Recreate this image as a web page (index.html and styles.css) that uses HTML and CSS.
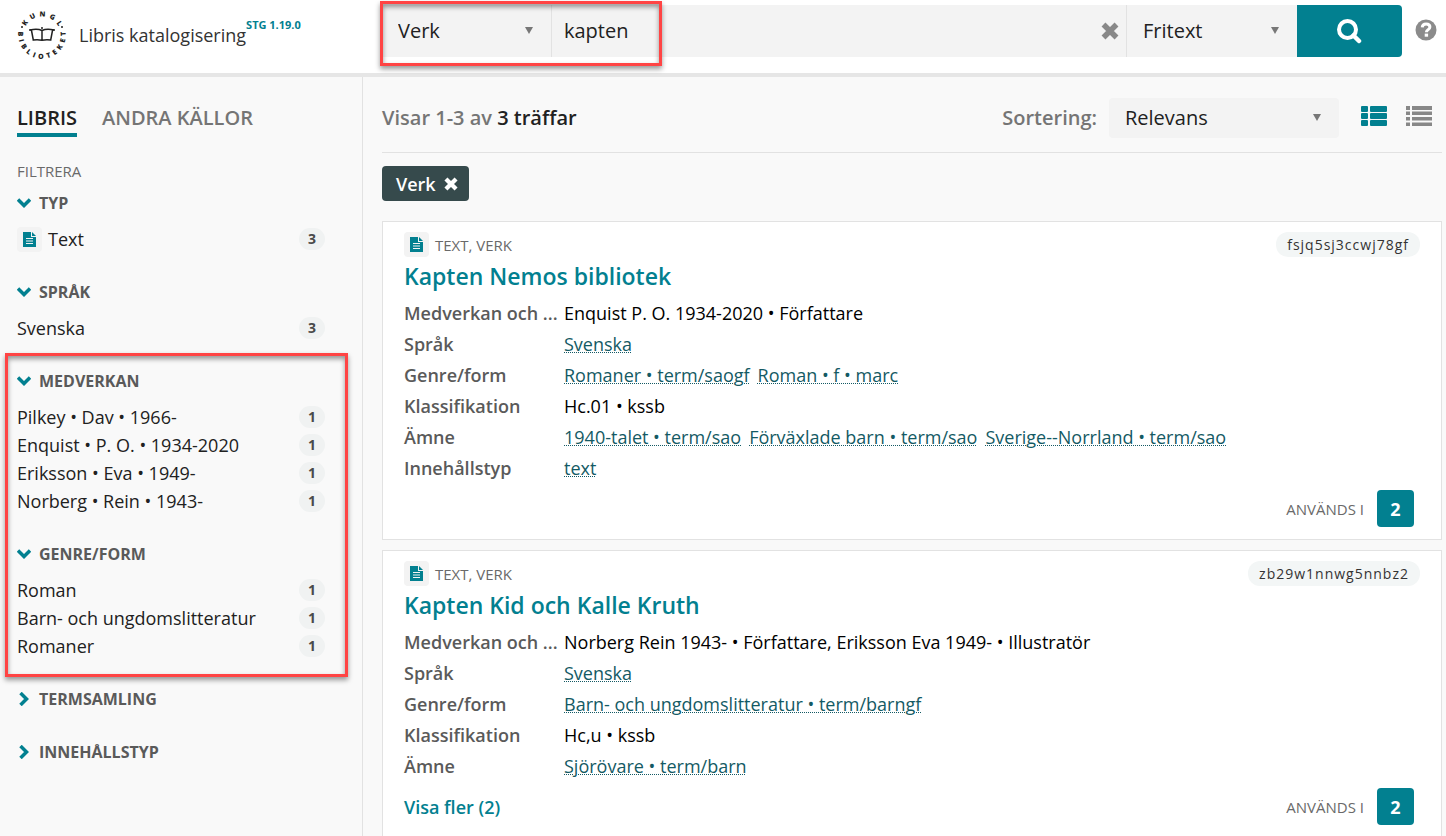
FILE: index.html
```html
<!DOCTYPE html>
<html lang="sv">
<head>
    <meta charset="UTF-8">
    <meta name="viewport" content="width=device-width, initial-scale=1.0">
    <title>Libris katalogisering</title>
    <link rel="stylesheet" href="styles.css">
</head>
<body>
    <!-- Ikoner -->
    <svg class="sprite" aria-hidden="true">
        <symbol id="icon-down" viewBox="0 0 14 10">
            <path d="M1 1.5 7 7.5 13 1.5" fill="none" stroke="currentColor" stroke-width="3.500"/>
        </symbol>
        <symbol id="icon-right" viewBox="0 0 10 14">
            <path d="M1.5 1 7.5 7 1.5 13" fill="none" stroke="currentColor" stroke-width="3.500"/>
        </symbol>
        <symbol id="icon-text" viewBox="0 0 13 15">
            <path fill="currentColor" fill-rule="evenodd" d="M0 0h8v5h5v10H0zM3 6v1h7V6zM3 8.500v1h7v-1zM3 11v1h7v-1z"/>
            <path fill="currentColor" d="M9 0l4 4H9z"/>
        </symbol>
        <symbol id="icon-cross" viewBox="0 0 18 18">
            <path d="M2.500 2.500l13 13M15.500 2.500l-13 13" fill="none" stroke="currentColor" stroke-width="5.500"/>
        </symbol>
    </svg>

    <header class="header">
        <a class="brand" href="#">
            <svg class="logo" viewBox="0 0 50 50" role="img" aria-label="Kungl. Biblioteket">
                <path id="arc-top" fill="none" d="M6.500 25a18.500 18.500 0 0 1 37 0"/>
                <path id="arc-bottom" fill="none" d="M4.400 13.100a23.800 23.800 0 1 0 41.200 0"/>
                <text class="logo-text"><textPath href="#arc-top" startOffset="50%" text-anchor="middle">K  U  N  G  L</textPath></text>
                <text class="logo-text"><textPath href="#arc-bottom" startOffset="50%" text-anchor="middle">B  I  B  L  I  O  T  E  K  E  T</textPath></text>
                <g fill="none" stroke="#222" stroke-width="1.500">
                    <path d="M13 20c4-1 9-1 12 .5 3-1.500 8-1.500 12-.5M14.500 20.500l1.800 9.500c3-.6 6-.4 8.700.2 2.700-.6 5.700-.8 8.700-.2l1.800-9.500M25 20.500v10"/>
                </g>
                <g fill="#222">
                    <circle cx="25" cy="18" r="1"/>
                    <circle cx="13" cy="20" r="1"/>
                    <circle cx="37" cy="20" r="1"/>
                    <circle cx="5" cy="17" r="1"/>
                    <circle cx="45" cy="17" r="1"/>
                </g>
            </svg>
            <span class="brand-name">Libris katalogisering</span>
            <span class="brand-version">STG 1.19.0</span>
        </a>

        <form class="search">
            <div class="select search-type">
                <select aria-label="Typ av resurs"><option>Verk</option></select>
            </div>
            <input class="search-input" type="text" value="kapten" aria-label="Sök">
            <button class="clear-button" type="button" aria-label="Rensa">
                <svg width="18" height="18"><use href="#icon-cross"/></svg>
            </button>
            <div class="select search-field">
                <select aria-label="Sökfält"><option>Fritext</option></select>
            </div>
            <button class="search-button" type="submit" aria-label="Sök">
                <svg width="26" height="26" viewBox="0 0 26 26" fill="none" stroke="#fff">
                    <circle cx="10.500" cy="11.500" r="8.500" stroke-width="4"/>
                    <path d="M16.500 17.500l5.500 5.500" stroke-width="4.500" stroke-linecap="round"/>
                </svg>
            </button>
            <div class="marker marker-search"></div>
        </form>
        <a class="help" href="#" aria-label="Hjälp">
            <svg width="22" height="22" viewBox="0 0 22 22">
                <circle cx="11" cy="11" r="10.500" fill="#8b8b8b"/>
                <path d="M7.200 8.400C7.400 6 9 4.900 11.100 4.900c2.200 0 3.800 1.200 3.800 3.100 0 2.700-3.500 2.500-3.500 5.300" fill="none" stroke="#fff" stroke-width="3"/>
                <path d="M9.700 14.600h3.400v3.100H9.700z" fill="#fff"/>
            </svg>
        </a>
    </header>

    <div class="page">
        <aside class="sidebar">
            <nav class="tabs">
                <a class="tab active" href="#">LIBRIS</a>
                <a class="tab" href="#">ANDRA KÄLLOR</a>
            </nav>

            <div class="filter-title">FILTRERA</div>

            <section class="facet">
                <button class="facet-toggle" type="button"><svg width="16" height="10"><use href="#icon-down"/></svg>TYP</button>
                <ul class="facet-list">
                    <li><a href="#"><span class="type-icon"><svg width="13" height="15"><use href="#icon-text"/></svg></span>Text</a><span class="count">3</span></li>
                </ul>
            </section>

            <section class="facet">
                <button class="facet-toggle" type="button"><svg width="16" height="10"><use href="#icon-down"/></svg>SPRÅK</button>
                <ul class="facet-list">
                    <li><a href="#">Svenska</a><span class="count">3</span></li>
                </ul>
            </section>

            <div class="facet-group">
                <section class="facet">
                    <button class="facet-toggle" type="button"><svg width="16" height="10"><use href="#icon-down"/></svg>MEDVERKAN</button>
                    <ul class="facet-list">
                        <li><a href="#">Pilkey • Dav • 1966-</a><span class="count">1</span></li>
                        <li><a href="#">Enquist • P. O. • 1934-2020</a><span class="count">1</span></li>
                        <li><a href="#">Eriksson • Eva • 1949-</a><span class="count">1</span></li>
                        <li><a href="#">Norberg • Rein • 1943-</a><span class="count">1</span></li>
                    </ul>
                </section>

                <section class="facet">
                    <button class="facet-toggle" type="button"><svg width="16" height="10"><use href="#icon-down"/></svg>GENRE/FORM</button>
                    <ul class="facet-list">
                        <li><a href="#">Roman</a><span class="count">1</span></li>
                        <li><a href="#">Barn- och ungdomslitteratur</a><span class="count">1</span></li>
                        <li><a href="#">Romaner</a><span class="count">1</span></li>
                    </ul>
                </section>
                <div class="marker marker-facets"></div>
            </div>

            <section class="facet">
                <button class="facet-toggle" type="button"><svg width="12" height="14"><use href="#icon-right"/></svg>TERMSAMLING</button>
            </section>

            <section class="facet">
                <button class="facet-toggle" type="button"><svg width="12" height="14"><use href="#icon-right"/></svg>INNEHÅLLSTYP</button>
            </section>
        </aside>

        <main class="results">
            <div class="results-bar">
                <div class="hits">Visar 1-3 av <strong>3 träffar</strong></div>
                <div class="sorting">
                    <label for="sort">Sortering:</label>
                    <div class="select sort-select">
                        <select id="sort"><option>Relevans</option></select>
                    </div>
                    <button class="view-button active" type="button" aria-label="Detaljerad vy">
                        <svg width="26" height="20" viewBox="0 0 26 20" fill="currentColor">
                            <rect width="7" height="6" rx="1"/><rect x="9" width="17" height="6" rx="1"/>
                            <rect y="7" width="7" height="6" rx="1"/><rect x="9" y="7" width="17" height="6" rx="1"/>
                            <rect y="14" width="7" height="6" rx="1"/><rect x="9" y="14" width="17" height="6" rx="1"/>
                        </svg>
                    </button>
                    <button class="view-button" type="button" aria-label="Kompakt vy">
                        <svg width="26" height="20" viewBox="0 0 26 20" fill="currentColor">
                            <path d="M0 0h4v4H0zM6 0h20v4H6zM0 5.500h4v3.500H0zM6 5.500h20v3.500H6zM0 11h4v3.500H0zM6 11h20v3.500H6zM0 16.500h4v3.500H0zM6 16.500h20v3.500H6z"/>
                        </svg>
                    </button>
                </div>
            </div>

            <div class="chips">
                <button class="chip" type="button">Verk<svg width="14" height="14"><use href="#icon-cross"/></svg></button>
            </div>

            <article class="card">
                <div class="card-top">
                    <span class="type-icon"><svg width="13" height="15"><use href="#icon-text"/></svg></span>
                    <span class="card-type">TEXT, VERK</span>
                    <span class="card-id">fsjq5sj3ccwj78gf</span>
                </div>
                <h2 class="card-title"><a href="#">Kapten Nemos bibliotek</a></h2>
                <dl class="details">
                    <dt>Medverkan och ...</dt><dd>Enquist P. O. 1934-2020 • Författare</dd>
                    <dt>Språk</dt><dd><a href="#">Svenska</a></dd>
                    <dt>Genre/form</dt><dd><a href="#">Romaner • term/saogf</a><a href="#">Roman • f • marc</a></dd>
                    <dt>Klassifikation</dt><dd>Hc.01 • kssb</dd>
                    <dt>Ämne</dt><dd><a href="#">1940-talet • term/sao</a><a href="#">Förväxlade barn • term/sao</a><a href="#">Sverige--Norrland • term/sao</a></dd>
                    <dt>Innehållstyp</dt><dd><a href="#">text</a></dd>
                </dl>
                <div class="card-bottom">
                    <span class="used-in">ANVÄNDS I</span>
                    <button class="used-count" type="button">2</button>
                </div>
            </article>

            <article class="card">
                <div class="card-top">
                    <span class="type-icon"><svg width="13" height="15"><use href="#icon-text"/></svg></span>
                    <span class="card-type">TEXT, VERK</span>
                    <span class="card-id">zb29w1nnwg5nnbz2</span>
                </div>
                <h2 class="card-title"><a href="#">Kapten Kid och Kalle Kruth</a></h2>
                <dl class="details">
                    <dt>Medverkan och ...</dt><dd>Norberg Rein 1943- • Författare, Eriksson Eva 1949- • Illustratör</dd>
                    <dt>Språk</dt><dd><a href="#">Svenska</a></dd>
                    <dt>Genre/form</dt><dd><a href="#">Barn- och ungdomslitteratur • term/barngf</a></dd>
                    <dt>Klassifikation</dt><dd>Hc,u • kssb</dd>
                    <dt>Ämne</dt><dd><a href="#">Sjörövare • term/barn</a></dd>
                </dl>
                <div class="card-bottom">
                    <a class="show-more" href="#">Visa fler (2)</a>
                    <span class="used-in">ANVÄNDS I</span>
                    <button class="used-count" type="button">2</button>
                </div>
            </article>
        </main>
    </div>
</body>
</html>
```
FILE: styles.css
```css
* {
    box-sizing: border-box;
}

body {
    font-family: "Open Sans", sans-serif;
    font-size: 18px;
    line-height: 28px;
    margin: 0;
    color: #212121;
    background-color: #f9f9f9;
    height: 100vh;
    overflow: hidden;
}

a {
    color: inherit;
    text-decoration: none;
}

button, input, select {
    font: inherit;
    color: inherit;
    border: none;
    border-radius: 0;
    background: none;
    margin: 0;
    padding: 0;
}

button {
    cursor: pointer;
}

svg {
    display: block;
    flex: none;
}

.sprite {
    position: absolute;
    width: 0;
    height: 0;
}

/* Sidhuvud */
.header {
    display: flex;
    align-items: flex-start;
    background-color: #fff;
    border-bottom: 4px solid #e6e6e6;
    padding: 5px 9px 13px 17px;
}

.brand {
    display: flex;
    align-items: center;
    flex: none;
    width: 365px;
    padding-top: 5px;
}

.logo {
    width: 50px;
    height: 50px;
    margin-right: 12px;
    overflow: visible;
}

.logo-text {
    font-size: 7px;
    font-weight: 800;
    fill: #222;
    white-space: pre;
}

.brand-name {
    color: #333;
}

.brand-version {
    align-self: flex-start;
    font-size: 11px;
    font-weight: 700;
    line-height: 30px;
    color: #028090;
}

.search {
    position: relative;
    display: flex;
    flex: 1;
    height: 52px;
}

.select {
    position: relative;
    background-color: #f3f3f3;
}

.select select {
    width: 100%;
    height: 100%;
    padding-left: 16px;
    appearance: none;
    outline: none;
}

.select::after {
    content: "";
    position: absolute;
    right: 18px;
    top: 50%;
    margin-top: -4px;
    border: 4px solid transparent;
    border-top: 7px solid #777;
    border-bottom: none;
    pointer-events: none;
}

.search .select {
    width: 170px;
    font-size: 20px;
    border-right: 1px solid #e2e2e2;
}

.search .search-field {
    width: 171px;
    border-left: 1px solid #e2e2e2;
    border-right: none;
}

.search-input {
    flex: 1;
    min-width: 0;
    font-size: 20px;
    padding: 0 12px;
    background-color: #f3f3f3;
    outline: none;
}

.clear-button {
    padding: 0 7px;
    color: #888;
    background-color: #f3f3f3;
}

.search-button {
    display: flex;
    align-items: center;
    justify-content: center;
    width: 105px;
    background-color: #028090;
    border-radius: 0 4px 4px 0;
}

.help {
    margin: 14px 0 0 13px;
}

/* Röda markeringar */
.marker {
    position: absolute;
    border: 3px solid #ff4444;
    box-shadow: 0 3px 5px rgba(0,0,0,0.4), inset 0 3px 5px rgba(0,0,0,0.4);
    pointer-events: none;
}

.marker-search {
    left: -2px;
    top: -4px;
    width: 282px;
    height: 65px;
}

.marker-facets {
    left: -12px;
    right: -23px;
    top: -14px;
    bottom: 8px;
}

/* Sidokolumn */
.page {
    display: flex;
}

.sidebar {
    flex: none;
    width: 363px;
    min-height: calc(100vh - 77px);
    padding: 26px 37px 0 17px;
    border-right: 1px solid #e2e2e2;
}

.tabs {
    display: flex;
    gap: 25px;
    margin-bottom: 20px;
}

.tab {
    font-size: 20px;
    line-height: 30px;
    font-weight: 600;
    color: #757575;
    border-bottom: 4px solid transparent;
}

.tab.active {
    color: #212121;
    border-color: #028090;
}

.filter-title {
    font-size: 15px;
    color: #6a6a6a;
    margin-bottom: 4px;
}

.facet {
    padding-bottom: 25px;
}

.facet-toggle {
    display: flex;
    align-items: center;
    font-size: 16px;
    font-weight: 700;
    color: #5a5a5a;
}

.facet-toggle svg {
    width: 14px;
    margin-right: 8px;
    color: #028090;
}

.facet-list {
    list-style: none;
    margin: 8px 0 0;
    padding: 0;
}

.facet-list li {
    display: flex;
    align-items: center;
    justify-content: space-between;
}

.facet-list a {
    display: flex;
    align-items: center;
    gap: 6px;
}

.count {
    width: 26px;
    font-size: 14px;
    line-height: 22px;
    font-weight: 700;
    text-align: center;
    color: #4a4a4a;
    background-color: #f0f2f2;
    border-radius: 11px;
}

.facet-group {
    position: relative;
}

.type-icon {
    display: flex;
    align-items: center;
    justify-content: center;
    width: 25px;
    height: 25px;
    color: #028090;
    background-color: #f3f3f3;
    border-radius: 4px;
}

/* Träfflista */
.results {
    flex: 1;
    min-width: 0;
    padding: 21px 4px 0 19px;
}

.results-bar {
    display: flex;
    align-items: center;
    justify-content: space-between;
    padding-bottom: 14px;
    border-bottom: 1px solid #e2e2e2;
    font-size: 20px;
    font-weight: 600;
    color: #757575;
}

.hits strong {
    font-weight: 600;
    color: #212121;
}

.sorting {
    display: flex;
    align-items: center;
    gap: 12px;
}

.sort-select {
    width: 230px;
    height: 40px;
    border-radius: 4px;
    font-weight: 400;
    color: #212121;
}

.view-button {
    margin: 0 10px 5px;
    color: #888;
}

.view-button.active {
    color: #028090;
}

.view-button:last-child {
    margin-left: -3px;
}

.chips {
    padding: 13px 0 20px;
}

.chip {
    display: flex;
    align-items: center;
    gap: 8px;
    height: 35px;
    padding: 0 11px 0 14px;
    font-weight: 600;
    color: #fff;
    background-color: #364a4c;
    border-radius: 4px;
}

.card {
    background-color: #fff;
    border: 1px solid #e2e2e2;
    padding: 10px 21px 12px;
    margin-bottom: 10px;
}

.card-top {
    display: flex;
    align-items: center;
}

.card-type {
    flex: 1;
    margin-left: 6px;
    font-size: 15px;
    line-height: 24px;
    color: #6a6a6a;
}

.card-id {
    padding: 0 11px;
    font-size: 14px;
    line-height: 25px;
    letter-spacing: 1px;
    color: #333;
    background-color: #f3f6f6;
    border-radius: 12px;
}

.card-title {
    margin: 4px 0 6px;
    font-size: 23px;
    line-height: 31px;
    font-weight: 600;
    color: #028090;
}

.details {
    display: grid;
    grid-template-columns: 154px 1fr;
    column-gap: 6px;
    margin: 0;
    line-height: 31px;
}

.details dt {
    font-weight: 600;
    color: #5a5a5a;
    white-space: nowrap;
}

.details dd {
    display: flex;
    flex-wrap: wrap;
    gap: 0 8px;
    margin: 0;
    color: #000;
}

.details a {
    color: #145a64;
    text-decoration: underline dotted 1px;
}

.card-bottom {
    display: flex;
    align-items: center;
    justify-content: flex-end;
    padding: 6px 6px 0 0;
}

.show-more {
    flex: 1;
    font-weight: 600;
    color: #028090;
}

.used-in {
    font-size: 15px;
    color: #6a6a6a;
}

.used-count {
    width: 37px;
    height: 37px;
    margin-left: 13px;
    font-weight: 700;
    color: #fff;
    background-color: #028090;
    border-radius: 4px;
}
```
